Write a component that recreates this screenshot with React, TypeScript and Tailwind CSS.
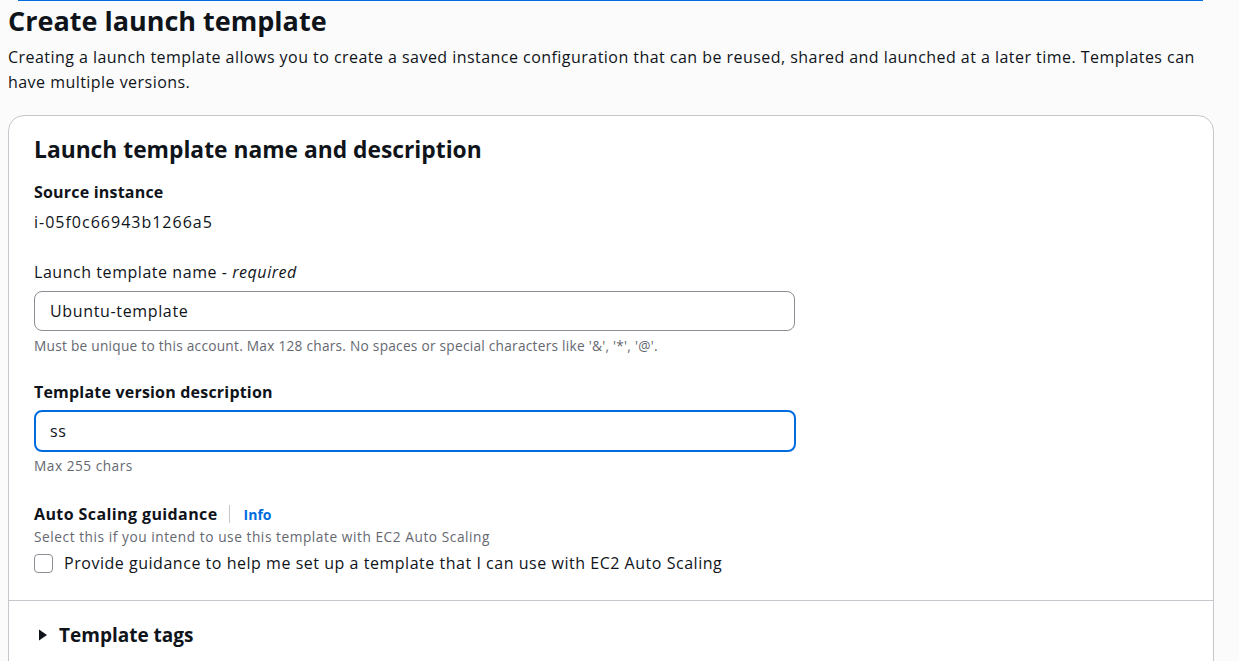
import React from "react";

export default function App() {
  return (
    <div
      className="min-h-[661px] bg-[#fbfbfb] text-[#0f141a] overflow-hidden"
      style={{ fontFamily: "'Open Sans', 'Noto Sans', sans-serif" }}
    >
      <div className="ml-[18px] w-[1185px] h-[1px] bg-[#006ce0]" />
      <div className="px-[8px]">
        <h1 className="text-[27px] leading-[36px] font-bold mt-[2px]">Create launch template</h1>
        <p className="text-[16px] leading-[25px] mt-[6px] whitespace-nowrap tracking-[0.46px]">
          Creating a launch template allows you to create a saved instance configuration that can be reused, shared and launched at a later time. Templates can
          <br />
          have multiple versions.
        </p>
        <div className="mt-[20px] w-[1206px] bg-white border border-[#c6c6cd] rounded-[16px]">
          <div className="px-[25px] pt-[19px] pb-[25px]">
            <h2 className="text-[22.8px] leading-[30px] font-bold">Launch template name and description</h2>
            <div className="mt-[16px] text-[16px] leading-[22px] font-bold tracking-[0.2px]">Source instance</div>
            <div className="text-[16px] leading-[22px] mt-[8px] tracking-[1px]">i-05f0c66943b1266a5</div>

            <div className="mt-[28px] text-[16px] leading-[22px] tracking-[0.55px]">
              Launch template name - <i>required</i>
            </div>
            <div className="mt-[8px] w-[761px] h-[40px] border border-[#8c8c94] rounded-[8px] flex items-center px-[15px] text-[16px] tracking-[0.65px]">
              Ubuntu-template
            </div>
            <div className="mt-[7px] text-[13.7px] leading-[16px] text-[#656871] tracking-[0.25px]">
              Must be unique to this account. Max 128 chars. No spaces or special characters like '&amp;', '*', '@'.
            </div>

            <div className="mt-[27px] text-[16px] leading-[22px] font-bold tracking-[0.2px]">Template version description</div>
            <div className="mt-[7px] w-[762px] h-[42px] border-2 border-[#006ce0] rounded-[8px] flex items-center px-[14px] text-[16px] tracking-[0.5px]">
              ss
            </div>
            <div className="mt-[6px] text-[13.7px] leading-[16px] text-[#656871] tracking-[0.5px]">Max 255 chars</div>

            <div className="mt-[29px] flex items-center h-[22px]">
              <span className="text-[16px] leading-[22px] font-bold tracking-[0.4px]">Auto Scaling guidance</span>
              <span className="ml-[11px] w-[1px] h-[18px] bg-[#c6c6cd]" />
              <span className="ml-[14px] text-[14px] font-bold text-[#006ce0]">Info</span>
            </div>
            <div className="mt-[4px] text-[13.7px] leading-[16px] text-[#656871] tracking-[0.55px]">
              Select this if you intend to use this template with EC2 Auto Scaling
            </div>
            <label className="mt-[6px] flex items-center h-[24px]">
              <span className="w-[19px] h-[19px] border border-[#8c8c94] rounded-[4px] bg-white" />
              <span className="ml-[11px] text-[16px] leading-[24px] tracking-[0.53px]">
                Provide guidance to help me set up a template that I can use with EC2 Auto Scaling
              </span>
            </label>
          </div>
          <div className="h-[1px] bg-[#c6c6cd]" />
          <div className="px-[29px] pt-[21px] pb-[30px] flex items-center">
            <svg width="10" height="12" viewBox="0 0 10 12" className="mr-[11px]">
              <path d="M1 0.5 L9 6 L1 11.5 Z" fill="#0f141a" />
            </svg>
            <span className="text-[19px] leading-[26px] font-bold">Template tags</span>
          </div>
        </div>
      </div>
    </div>
  );
}
